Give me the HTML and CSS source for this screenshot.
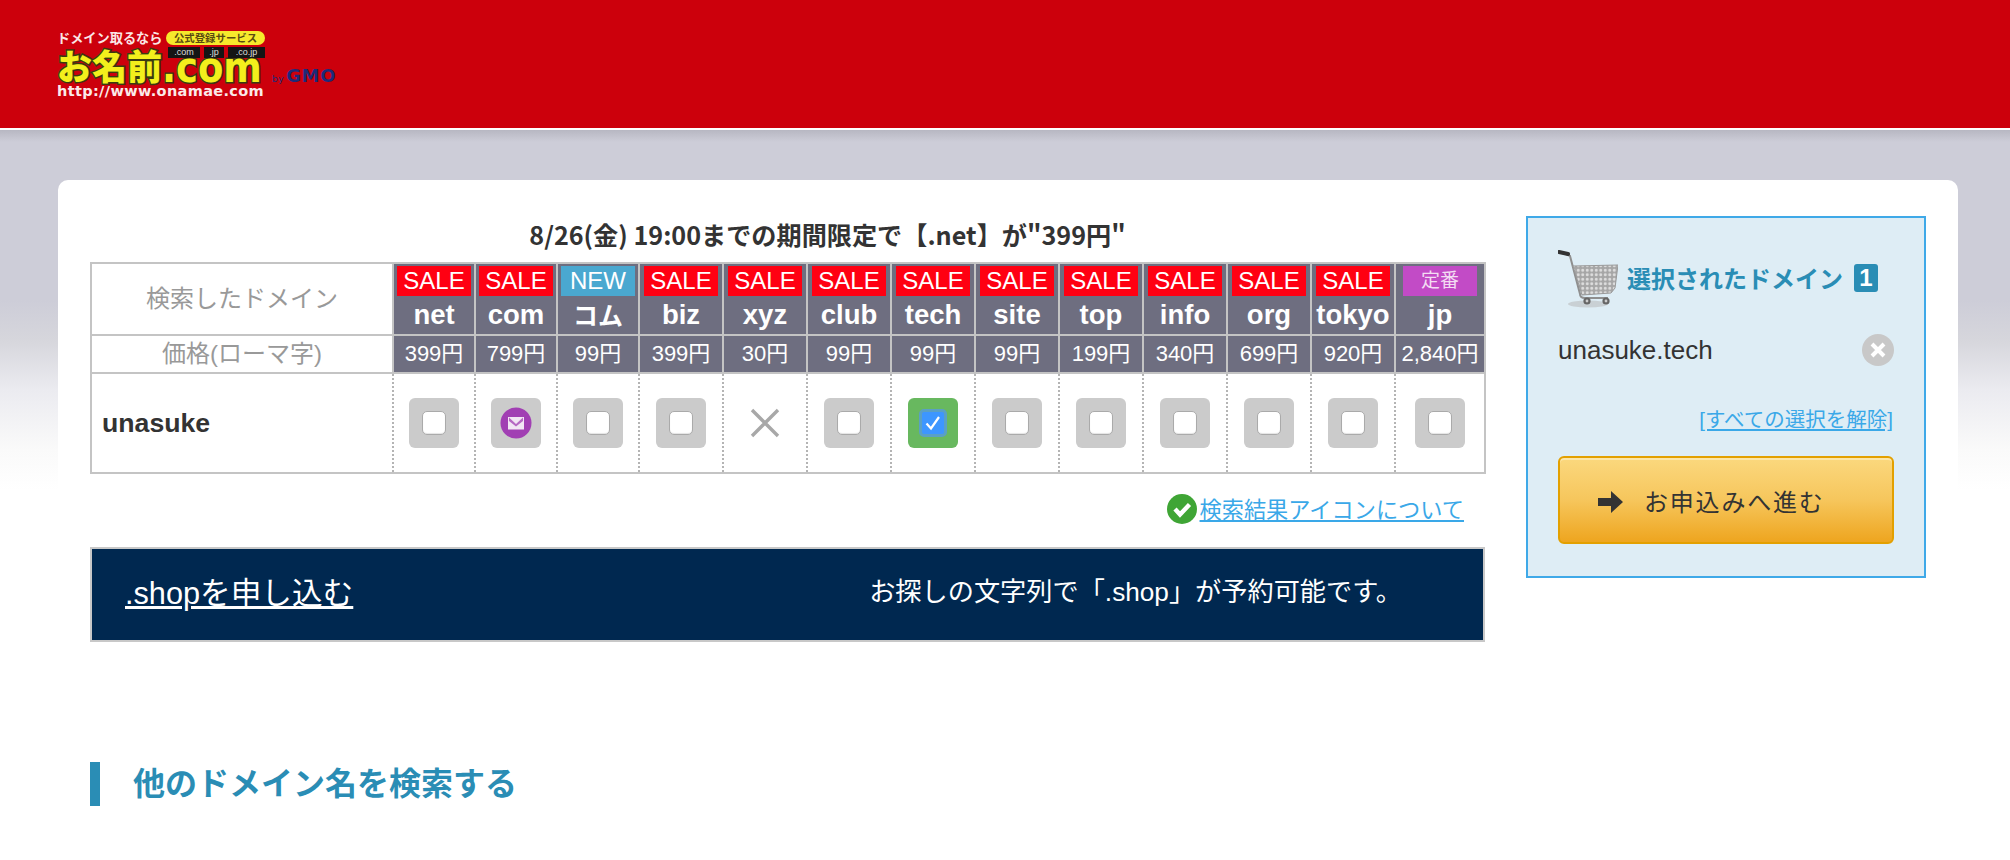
FILE: index.html
```html
<!DOCTYPE html>
<html lang="ja">
<head>
  <meta charset="UTF-8">
  <title>お名前.com ドメイン検索結果</title>
  <link rel="stylesheet" href="styles.css">
</head>
<body>
  <header class="site-header">
    <a class="logo" href="#">
      <span class="logo-main">
        <span class="logo-top"><span class="logo-catch">ドメイン取るなら</span><span class="logo-pill">公式登録サービス</span></span>
        <span class="logo-name"><span class="logo-kanji">お名前</span><span class="logo-com">.com</span></span>
        <span class="logo-chips"><span>.com</span><span>.jp</span><span>.co.jp</span></span>
        <span class="logo-url">http://www.onamae.com</span>
      </span>
      <span class="logo-gmo"><small>by</small>GMO</span>
    </a>
  </header>

  <div class="card">
    <main class="results">
      <h2 class="campaign">8/26(金) 19:00までの期間限定で【.net】が"399円"</h2>

      <table class="domain-table">
        <colgroup>
          <col class="col-name">
          <col class="col-s"><col class="col-s"><col class="col-s">
          <col class="col-m"><col class="col-m"><col class="col-m"><col class="col-m"><col class="col-m"><col class="col-m"><col class="col-m"><col class="col-m"><col class="col-m">
          <col class="col-l">
        </colgroup>
        <tr class="row-tld">
          <th class="label label-large">検索したドメイン</th>
          <td><span class="tag sale">SALE</span><b>net</b></td>
          <td><span class="tag sale">SALE</span><b>com</b></td>
          <td><span class="tag new">NEW</span><b class="kana">コム</b></td>
          <td><span class="tag sale">SALE</span><b>biz</b></td>
          <td><span class="tag sale">SALE</span><b>xyz</b></td>
          <td><span class="tag sale">SALE</span><b>club</b></td>
          <td><span class="tag sale">SALE</span><b>tech</b></td>
          <td><span class="tag sale">SALE</span><b>site</b></td>
          <td><span class="tag sale">SALE</span><b>top</b></td>
          <td><span class="tag sale">SALE</span><b>info</b></td>
          <td><span class="tag sale">SALE</span><b>org</b></td>
          <td><span class="tag sale">SALE</span><b>tokyo</b></td>
          <td><span class="tag std">定番</span><b>jp</b></td>
        </tr>
        <tr class="row-price">
          <th class="label">価格(ローマ字)</th>
          <td>399円</td><td>799円</td><td>99円</td><td>399円</td><td>30円</td><td>99円</td><td>99円</td><td>99円</td><td>199円</td><td>340円</td><td>699円</td><td>920円</td><td>2,840円</td>
        </tr>
        <tr class="row-result">
          <th class="query">unasuke</th>
          <td><span class="tile"><i class="box"></i></span></td>
          <td><span class="tile">
            <svg class="mail" viewBox="0 0 32 32" width="32" height="32">
              <circle cx="16" cy="16" r="15.5" fill="#a13fb3"/>
              <rect x="8" y="10" width="16" height="12.5" fill="#f2e6f4"/>
              <path d="M9 10.5 L16 17 L23 10.5 L23 14 L16 19.5 L9 14 Z" fill="#a13fb3" opacity="0.75"/>
            </svg>
          </span></td>
          <td><span class="tile"><i class="box"></i></span></td>
          <td><span class="tile"><i class="box"></i></span></td>
          <td>
            <svg class="cross" viewBox="0 0 30 30" width="30" height="30">
              <path d="M2 2 L28 28 M28 2 L2 28" stroke="#a8a8a8" stroke-width="3.4" fill="none"/>
            </svg>
          </td>
          <td><span class="tile"><i class="box"></i></span></td>
          <td><span class="tile tile-on"><i class="box box-on">
            <svg viewBox="0 0 20 20" width="20" height="20">
              <path d="M3.5 10.5 L8 15.5 L16 4" stroke="#fff" stroke-width="2.2" fill="none"/>
            </svg>
          </i></span></td>
          <td><span class="tile"><i class="box"></i></span></td>
          <td><span class="tile"><i class="box"></i></span></td>
          <td><span class="tile"><i class="box"></i></span></td>
          <td><span class="tile"><i class="box"></i></span></td>
          <td><span class="tile"><i class="box"></i></span></td>
          <td><span class="tile"><i class="box"></i></span></td>
        </tr>
      </table>

      <p class="icon-help">
        <svg viewBox="0 0 30 30" width="30" height="30">
          <circle cx="15" cy="15" r="15" fill="#3fa535"/>
          <path d="M8 15 L13 20.5 L22.5 10.5" stroke="#fff" stroke-width="4.4" fill="none"/>
        </svg>
        <a href="#">検索結果アイコンについて</a>
      </p>

      <div class="shop-banner">
        <a href="#">.shopを申し込む</a>
        <span>お探しの文字列で「.shop」が予約可能です。</span>
      </div>

      <h2 class="section-title">他のドメイン名を検索する</h2>
    </main>

    <aside class="selected">
      <div class="selected-head">
        <svg class="cart" viewBox="0 0 60 58" width="60" height="58">
          <defs>
            <pattern id="mesh" width="4.5" height="4.5" patternUnits="userSpaceOnUse">
              <rect width="4.5" height="4.5" fill="#a6a6a6"/>
              <circle cx="2.25" cy="2.25" r="1.5" fill="#dedede"/>
            </pattern>
          </defs>
          <ellipse cx="30" cy="54" rx="20" ry="3.5" fill="#c9d0d4"/>
          <path d="M8 4 L12 6 L22 44 Q22 48 27 48 L50 48" stroke="#8f8f8f" stroke-width="2" fill="none"/>
          <path d="M1 2 L10 4" stroke="#333" stroke-width="4" stroke-linecap="round"/>
          <path d="M15 16 L60 15 L57 38 L53 43 L24 45 Z" fill="url(#mesh)"/>
          <path d="M15 16 L60 15 L57 38 L53 43 L24 45 Z" fill="none" stroke="#999" stroke-width="1"/>
          <circle cx="29" cy="51" r="3.6" fill="#666"/>
          <circle cx="48" cy="51" r="3.6" fill="#666"/>
          <circle cx="29" cy="51" r="1.4" fill="#ccc"/>
          <circle cx="48" cy="51" r="1.4" fill="#ccc"/>
        </svg>
        <h3>選択されたドメイン</h3>
        <span class="count">1</span>
      </div>

      <div class="selected-item">
        <span>unasuke.tech</span>
        <svg viewBox="0 0 32 32" width="32" height="32">
          <circle cx="16" cy="16" r="16" fill="#c8c8c8"/>
          <path d="M10 10 L22 22 M22 10 L10 22" stroke="#fff" stroke-width="4" fill="none"/>
        </svg>
      </div>

      <p class="clear-all"><a href="#">[すべての選択を解除]</a></p>

      <a class="apply" href="#">
        <svg viewBox="0 0 26 22" width="26" height="22">
          <path d="M0 7 L13 7 L13 0 L25 11 L13 22 L13 15 L0 15 Z" fill="#333"/>
        </svg>
        <span>お申込みへ進む</span>
      </a>
    </aside>
  </div>
</body>
</html>
```

FILE: styles.css
```css
body {
  margin: 0;
  font-family: "Liberation Sans", "Noto Sans CJK JP", sans-serif;
  color: #333;
  background: #fff linear-gradient(#b7b7c2 130px, #cdcdd8 142px, #cdcdd8 300px, #d6d6dc 340px, #ebebf0 390px, #fafafa 450px, #fff 490px) no-repeat;
}

a {
  color: #3aa8e8;
}

/* header */
.site-header {
  height: 128px;
  border-bottom: 2px solid #fff;
  background: #cc000c;
  padding-left: 57px;
}
.logo {
  display: inline-flex;
  align-items: flex-end;
  padding-top: 30px;
  text-decoration: none;
}
.logo-main {
  position: relative;
  display: flex;
  flex-direction: column;
  width: 208px;
}
.logo-top {
  display: flex;
  justify-content: space-between;
  align-items: center;
  height: 15px;
}
.logo-catch {
  color: #fbe6e6;
  font: bold 13.2px/15px "Noto Sans CJK JP", sans-serif;
  white-space: nowrap;
}
.logo-pill {
  width: 99px;
  height: 14px;
  border-radius: 7px;
  background: #f6e92c;
  color: #5a4a10;
  font: bold 10.4px/14px "Noto Sans CJK JP", sans-serif;
  text-align: center;
  white-space: nowrap;
}
.logo-name {
  display: flex;
  align-items: flex-start;
  height: 39px;
  color: #f3ef1c;
  white-space: nowrap;
}
.logo-kanji {
  width: 106px;
  font: 900 35px/39px "Noto Sans CJK JP", sans-serif;
  -webkit-text-stroke: 3px #3a3a10;
  paint-order: stroke fill;
}
.logo-com {
  font: bold 42px/45px "DejaVu Sans", sans-serif;
  transform: scaleX(0.88);
  transform-origin: left center;
  -webkit-text-stroke: 3px #3a3a10;
  paint-order: stroke fill;
}
.logo-chips {
  position: absolute;
  top: 17px;
  right: 0;
  display: flex;
  gap: 4px;
}
.logo-chips span {
  background: #151515;
  color: #ddd;
  padding: 0 4px;
  height: 11px;
  font: 9px/11px "Liberation Sans", sans-serif;
  text-align: center;
}
.logo-chips span:first-child {
  width: 24px;
}
.logo-chips span:nth-child(2) {
  width: 12px;
}
.logo-chips span:nth-child(3) {
  width: 29px;
}
.logo-url {
  height: 14px;
  color: #fbeaea;
  font: bold 14.5px/14px "DejaVu Sans", sans-serif;
  letter-spacing: 0.35px;
  white-space: nowrap;
}
.logo-gmo {
  margin: 0 0 12px 7px;
  color: #1e2a78;
  font: bold 18px/14px "DejaVu Sans", sans-serif;
  letter-spacing: 0.6px;
  white-space: nowrap;
}
.logo-gmo small {
  font-size: 9px;
  font-weight: normal;
  margin-right: 2px;
}

/* card */
.card {
  display: flex;
  gap: 41px;
  width: 1900px;
  box-sizing: border-box;
  margin: 50px 0 0 58px;
  padding: 36px 0 54px 32px;
  background: #fff;
  border-radius: 10px;
}
.results {
  width: 1395px;
}
.campaign {
  margin: 0 0 10px;
  padding-left: 80px;
  font: bold 25.17px/36px "Noto Sans CJK JP", sans-serif;
  color: #333;
  text-align: center;
}

/* domain table */
.domain-table {
  width: 1394px;
  table-layout: fixed;
  border-collapse: collapse;
  border: 2px solid #c4c4c4;
}
.col-name { width: 302px; }
.col-s { width: 82px; }
.col-m { width: 84px; }
.col-l { width: 90px; }
.domain-table td,
.domain-table th {
  padding: 0;
  border: 2px solid #c4c4c4;
  text-align: center;
}
.row-tld {
  height: 72px;
}
.row-tld td,
.row-price td {
  background: #6e6e80;
  color: #fff;
}
.row-tld td {
  vertical-align: top;
  padding-top: 2px;
}
.row-tld b {
  display: block;
  font-size: 27.5px;
  line-height: 37px;
  white-space: nowrap;
}
.row-tld .kana {
  font-family: "Noto Sans CJK JP", sans-serif;
  font-size: 25px;
}
.row-price {
  height: 38px;
  line-height: 34px;
}
.row-price td {
  font-size: 22px;
}
.label {
  font-size: 24px;
  font-weight: normal;
  color: #999;
}
.label-large {
  padding-bottom: 6px !important;
}
.tag {
  display: block;
  width: 74px;
  height: 30px;
  margin: 0 auto;
  color: #fff;
  font-size: 24px;
  line-height: 30px;
}
.sale { background: #ff0012; }
.new { background: #4aa8d0; }
.std {
  background: #c24bc6;
  font-size: 19px;
  color: #f3dcf3;
}
.row-result {
  height: 100px;
}
.row-result td,
.row-result .query {
  border-right: 2px dotted #b4b4b4;
  border-left: 2px dotted #b4b4b4;
  vertical-align: middle;
}
.row-result .query {
  border-left: 2px solid #c4c4c4;
  padding-left: 10px;
  text-align: left;
  font-size: 26.67px;
  color: #333;
}
.row-result td:last-child {
  border-right: 2px solid #c4c4c4;
}
.tile {
  display: inline-flex;
  align-items: center;
  justify-content: center;
  width: 50px;
  height: 50px;
  border-radius: 6px;
  background: #cbcbcb;
  vertical-align: middle;
}
.box {
  width: 22px;
  height: 22px;
  border: 1px solid #aaa;
  border-radius: 5px;
  background: #fff;
  box-shadow: inset 0 -1px 1px #e4e4e4;
}
.tile-on {
  background: #68b85f;
}
.box-on {
  display: flex;
  align-items: center;
  justify-content: center;
  border: 3px solid #5aa0c4;
  background: #3d96ff;
  box-shadow: none;
}
.cross {
  vertical-align: middle;
}

/* help link */
.icon-help {
  display: flex;
  justify-content: flex-end;
  align-items: center;
  gap: 3px;
  margin: 19px 21px 0 0;
  height: 31px;
  font-size: 22.2px;
  white-space: nowrap;
}
.icon-help a {
  padding-bottom: 2px;
}

/* .shop banner */
.shop-banner {
  display: flex;
  justify-content: space-between;
  align-items: center;
  height: 95px;
  box-sizing: border-box;
  margin-top: 23px;
  padding: 0 81px 9px 33px;
  border: 2px solid #c8c8c8;
  background: #002850;
  color: #fff;
  font-size: 26.2px;
  white-space: nowrap;
}
.shop-banner a {
  color: #fff;
  font-size: 30.67px;
}

.section-title {
  margin: 120px 0 0;
  padding-left: 33px;
  height: 44px;
  border-left: 10px solid #2a8db5;
  color: #2a8db5;
  font: bold 32px/38px "Noto Sans CJK JP", sans-serif;
}

/* selected domains */
.selected {
  width: 400px;
  height: 362px;
  box-sizing: border-box;
  padding: 32px 30px 0;
  border: 2px solid #3fa9e8;
  background: #deedf5;
}
.selected-head {
  display: flex;
  align-items: center;
  height: 58px;
}
.selected-head h3 {
  margin: 0 0 2px 9px;
  color: #2a8db5;
  font: bold 24px/28px "Noto Sans CJK JP", sans-serif;
  white-space: nowrap;
}
.count {
  width: 24px;
  height: 28px;
  margin: 0 0 2px 11px;
  border-radius: 3px;
  background: #2a8db5;
  color: #fff;
  font-size: 24px;
  font-weight: bold;
  line-height: 28px;
  text-align: center;
}
.selected-item {
  display: flex;
  justify-content: space-between;
  align-items: center;
  height: 34px;
  margin-top: 25px;
  font-size: 26px;
}
.clear-all {
  margin: 38px 1px 0 0;
  font-size: 20.5px;
  line-height: 30px;
  text-align: right;
  white-space: nowrap;
}
.apply {
  display: flex;
  align-items: center;
  gap: 20px;
  height: 88px;
  box-sizing: border-box;
  margin-top: 21px;
  padding-left: 38px;
  border: 2px solid #e3a000;
  border-radius: 6px;
  background: linear-gradient(#fbd87e, #f6c65c 50%, #eea51f);
  box-shadow: inset 0 2px 0 #fde6a8;
  color: #333;
  font-size: 24px;
  letter-spacing: 1.8px;
  text-decoration: none;
}
.apply svg {
  margin-top: 4px;
}
```
